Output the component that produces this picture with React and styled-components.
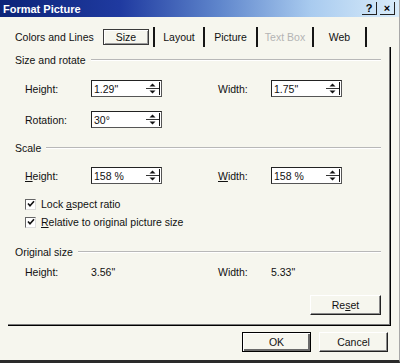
import React from "react";
import styled, { createGlobalStyle } from "styled-components";

const Global = createGlobalStyle`
  * { box-sizing: border-box; }
  body {
    margin: 0;
    background: #f6f6ee;
  }
`;

const Window = styled.div`
  width: 400px;
  height: 363px;
  display: flex;
  flex-direction: column;
  background: #f6f6ee;
  font-family: "Liberation Sans", Arial, sans-serif;
  font-size: 10.5px;
  color: #111;
  overflow: hidden;
  border-right: 1px solid #a8a8a8;
  border-bottom: 3px solid #2a2a2a;
`;

const TitleBar = styled.div`
  height: 17px;
  flex: none;
  display: flex;
  align-items: center;
  justify-content: space-between;
  padding: 0 4px 0 3px;
  background: linear-gradient(
    to right,
    #0c2478 0%,
    #1f3aa0 30%,
    #5f86cc 55%,
    #a9cbef 78%,
    #d9ecfa 100%
  );
`;

const TitleText = styled.span`
  color: #fff;
  font-weight: bold;
  font-size: 11px;
`;

const CaptionButtons = styled.div`
  display: flex;
  gap: 3px;
`;

const CaptionButton = styled.div`
  width: 15px;
  height: 13px;
  display: flex;
  align-items: center;
  justify-content: center;
  font-weight: bold;
  font-size: 11px;
  color: #000;
  border-right: 1px solid #222;
  border-bottom: 1px solid #222;
`;

const Tabs = styled.div`
  display: flex;
  height: 20px;
  margin-top: 10px;
  padding-left: 8px;
  flex: none;
`;

const Tab = styled.div`
  width: ${(p) => p.$w}px;
  height: 20px;
  display: flex;
  align-items: center;
  justify-content: ${(p) => (p.$left ? "flex-start" : "center")};
  padding-left: ${(p) => (p.$left ? 7 : 0)}px;
  color: ${(p) => (p.$disabled ? "#b4b4b4" : "#111")};
  border-right: ${(p) => (p.$edge ? "2px solid #151515" : "none")};
`;

const FocusBox = styled.div`
  width: 46px;
  height: 16px;
  margin-right: 4px;
  display: flex;
  align-items: center;
  justify-content: center;
  border: 1px solid #3a3a3a;
  box-shadow: inset 1px 1px 0 #fff, inset -1px -1px 0 #9a9a9a;
`;

const Panel = styled.div`
  margin: 0 8px;
  display: flex;
  flex-direction: column;
  padding: 6px 9px 10px 7px;
  border-right: 1px solid #000;
  border-bottom: 1px solid #000;
  box-shadow: inset -1px -1px 0 #7a7a7a;
`;

const SectionHeader = styled.div`
  height: 14px;
  display: flex;
  align-items: center;
  gap: 5px;
  margin-top: ${(p) => p.$top || 0}px;
  white-space: nowrap;
`;

const Rule = styled.div`
  flex: 1;
  border-top: 1px solid #b8b8b8;
  border-bottom: 1px solid #fff;
`;

const FieldRow = styled.div`
  display: grid;
  grid-template-columns: 66px 127px 53px 71px;
  align-items: center;
  height: ${(p) => p.$h || 17}px;
  margin-top: ${(p) => p.$top}px;
  margin-left: 10px;
`;

const U = styled.span`
  text-decoration: underline;
`;

const SpinBox = styled.div`
  width: 71px;
  height: 17px;
  display: flex;
  background: #fff;
  border-top: 1px solid #222;
  border-left: 1px solid #222;
  border-right: 1px solid #555;
  border-bottom: 1px solid #555;
`;

const SpinValue = styled.div`
  flex: 1;
  padding-left: 2px;
  display: flex;
  align-items: center;
`;

const Spinner = styled.div`
  width: 14px;
  display: flex;
  flex-direction: column;
  border-right: 1px solid #111;
  margin: 1px 1px 1px 0;
`;

const SpinHalf = styled.div`
  flex: 1;
  display: flex;
  align-items: center;
  justify-content: center;
  border-bottom: ${(p) => (p.$top ? "1px solid #333" : "none")};
`;

const CheckRow = styled.label`
  height: 18px;
  display: flex;
  align-items: center;
  gap: 5px;
  margin-left: 10px;
  margin-top: ${(p) => p.$top || 0}px;
`;

const CheckBox = styled.div`
  width: 11px;
  height: 11px;
  background: #fff;
  border-top: 1px solid #666;
  border-left: 1px solid #666;
  border-right: 1px solid #ddd;
  border-bottom: 1px solid #ddd;
  display: flex;
  align-items: center;
  justify-content: center;
`;

const Button = styled.div`
  width: ${(p) => p.$w}px;
  height: ${(p) => p.$h}px;
  display: flex;
  align-items: center;
  justify-content: center;
  background: #f6f6ee;
  border-top: 1px solid #fff;
  border-left: 1px solid #fff;
  border-right: 1px solid #222;
  border-bottom: 1px solid #222;
  box-shadow: inset -1px -1px 0 #8a8a8a;
  ${(p) =>
    p.$default &&
    `
    border: 1px solid #000;
    box-shadow: inset 1px 1px 0 #fff, inset -2px -2px 0 #6a6a6a;
  `}
`;

const ResetWrap = styled.div`
  display: flex;
  justify-content: flex-end;
  margin-top: 16px;
`;

const ButtonRow = styled.div`
  display: flex;
  justify-content: flex-end;
  gap: 8px;
  margin-top: 6px;
  padding-right: 11px;
`;

const Up = () => (
  <svg width="7" height="4" viewBox="0 0 7 4">
    <path d="M0.5 3.5 L3.5 0.5 L6.5 3.5 Z" fill="#111" />
  </svg>
);

const Down = () => (
  <svg width="7" height="4" viewBox="0 0 7 4">
    <path d="M0.5 0.5 L3.5 3.5 L6.5 0.5 Z" fill="#111" />
  </svg>
);

const Spin = ({ value }) => (
  <SpinBox>
    <SpinValue>{value}</SpinValue>
    <Spinner>
      <SpinHalf $top>
        <Up />
      </SpinHalf>
      <SpinHalf>
        <Down />
      </SpinHalf>
    </Spinner>
  </SpinBox>
);

const Check = () => (
  <CheckBox>
    <svg width="8" height="8" viewBox="0 0 8 8">
      <path d="M1 3.5 L3 5.8 L7 1.2" stroke="#111" strokeWidth="1.6" fill="none" />
    </svg>
  </CheckBox>
);

export default function App() {
  return (
    <>
      <Global />
      <Window>
        <TitleBar>
          <TitleText>Format Picture</TitleText>
          <CaptionButtons>
            <CaptionButton>?</CaptionButton>
            <CaptionButton>×</CaptionButton>
          </CaptionButtons>
        </TitleBar>

        <Tabs>
          <Tab $w={95} $left>Colors and Lines</Tab>
          <Tab $w={52} $edge>
            <FocusBox>Size</FocusBox>
          </Tab>
          <Tab $w={50} $edge>Layout</Tab>
          <Tab $w={53} $edge>Picture</Tab>
          <Tab $w={56} $edge $disabled>Text Box</Tab>
          <Tab $w={53} $edge>Web</Tab>
        </Tabs>

        <Panel>
          <SectionHeader>
            Size and rotate
            <Rule />
          </SectionHeader>
          <FieldRow $top={13}>
            <span>Height:</span>
            <Spin value={"1.29\""} />
            <span>Width:</span>
            <Spin value={"1.75\""} />
          </FieldRow>
          <FieldRow $top={14}>
            <span>Rotation:</span>
            <Spin value="30°" />
          </FieldRow>

          <SectionHeader $top={13}>
            Scale
            <Rule />
          </SectionHeader>
          <FieldRow $top={12}>
            <span>
              <U>H</U>eight:
            </span>
            <Spin value="158 %" />
            <span>
              <U>W</U>idth:
            </span>
            <Spin value="158 %" />
          </FieldRow>
          <CheckRow $top={11}>
            <Check />
            <span>
              Lock <U>a</U>spect ratio
            </span>
          </CheckRow>
          <CheckRow>
            <Check />
            <span>
              <U>R</U>elative to original picture size
            </span>
          </CheckRow>

          <SectionHeader $top={14}>
            Original size
            <Rule />
          </SectionHeader>
          <FieldRow $top={6} $h={14}>
            <span>Height:</span>
            <span>3.56"</span>
            <span>Width:</span>
            <span>5.33"</span>
          </FieldRow>

          <ResetWrap>
            <Button $w={71} $h={20}>
              <span>
                Re<U>s</U>et
              </span>
            </Button>
          </ResetWrap>
        </Panel>

        <ButtonRow>
          <Button $w={69} $h={20} $default>OK</Button>
          <Button $w={69} $h={20}>Cancel</Button>
        </ButtonRow>
      </Window>
    </>
  );
}
